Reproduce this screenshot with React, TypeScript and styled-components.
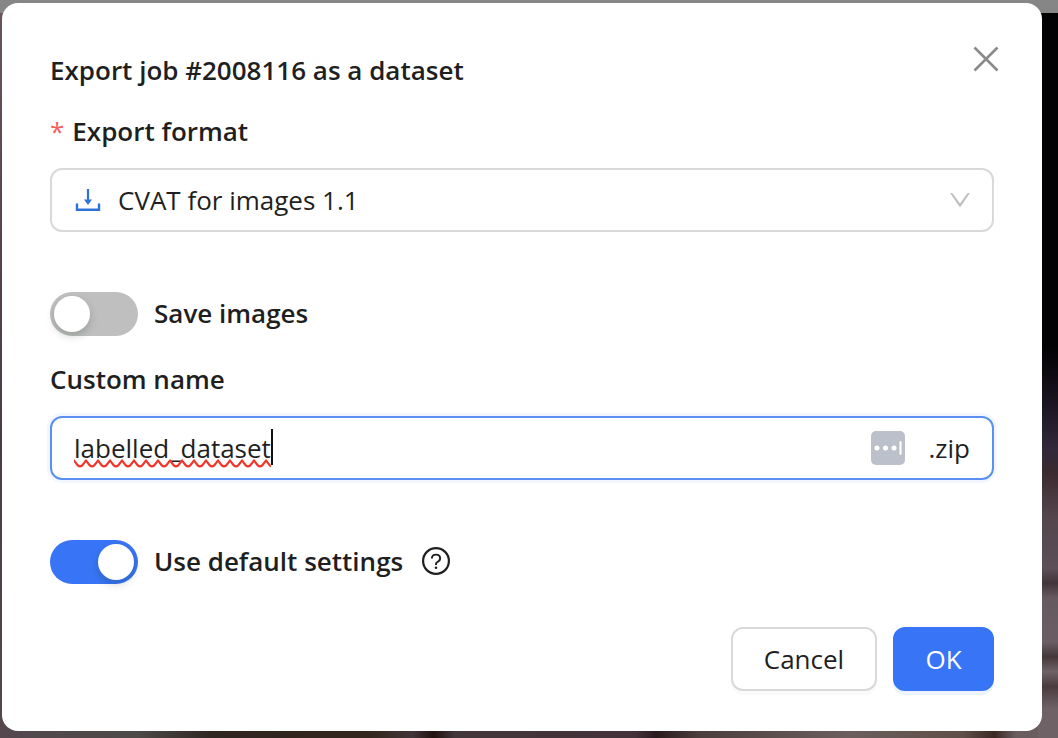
import { useState } from "react";
import styled, { createGlobalStyle } from "styled-components";

const GlobalStyle = createGlobalStyle`
  *, *::before, *::after { box-sizing: border-box; }
  body {
    margin: 0;
    color: #1f1f1f;
    font-family: "Open Sans", "Noto Sans", sans-serif;
    font-size: 26px;
    line-height: 44px;
  }
  button, input, select { font: inherit; color: inherit; }
`;

const Backdrop = styled.div`
  display: flex;
  flex-direction: column;
  min-height: 100vh;
  padding: 3px 16px 7px 2px;
  background:
    linear-gradient(#868686, #868686) top / 100% 13px no-repeat,
    linear-gradient(12deg, transparent 0 1%, transparent) top / 100% 1px no-repeat,
    linear-gradient(#020103 0 47%, #16101a 53%, #33293a 61%, #3a2a30 64%, #54454c 70%, #5c4f58 77%, #41353a 79%, #655a60 81%, #6a5e64 87%, #45373a 89%, #6f6266 91%, #4a3b3e 93%, #6e6266 96%) right / 20px 100% no-repeat,
    linear-gradient(#6b5460, #55424f 35%, #4a3b47 60%, #54474e) left / 20px 100% no-repeat,
    linear-gradient(90deg, #53474e, #4d4a48 13%, #302622 20%, #33261c 35%, #42353a 39%, #21120f 41%, #43363a 43%, #44323a 60%, #2a1a1d 62%, #4a3d3c 66%, #6b5e5d 80%, #5f4f48 91%, #3a2824 94%, #6a5d60 96%);
`;

const Dialog = styled.form`
  position: relative;
  flex: 1;
  display: flex;
  flex-direction: column;
  padding: 46px 48px 40px;
  border-radius: 16px;
  background: #fff;
`;

const Title = styled.h1`
  margin: 0 60px 19px 0;
  font-size: 26px;
  line-height: 42px;
  font-weight: 600;
`;

const CloseButton = styled.button`
  position: absolute;
  top: 34px;
  right: 34px;
  display: grid;
  place-items: center;
  width: 44px;
  height: 44px;
  padding: 0;
  border: 0;
  background: none;
  color: #8a8a8a;
`;

const Field = styled.div`
  display: flex;
  flex-direction: column;
  gap: 16px;
  margin-bottom: 60px;
`;

const Label = styled.label`
  display: flex;
  gap: 8px;
  line-height: 42px;
  font-weight: 600;
`;

const Required = styled.span`
  color: #f5605c;
  font-weight: 400;
`;

const SelectBox = styled.div`
  position: relative;
  height: 64px;
`;

const Select = styled.select`
  appearance: none;
  width: 100%;
  height: 100%;
  padding: 0 66px;
  border: 2px solid #d9d9d9;
  border-radius: 12px;
  background: #fff;
  outline: none;
`;

const SelectIcon = styled.svg<{ $side: "left" | "right" }>`
  position: absolute;
  top: 0;
  bottom: 0;
  ${(p) => p.$side}: 24px;
  margin: auto 0;
  pointer-events: none;
`;

const SwitchRow = styled.div<{ $gap: number }>`
  display: flex;
  gap: 16px;
  margin-bottom: ${(p) => p.$gap}px;
`;

const Switch = styled.input`
  appearance: none;
  flex: none;
  width: 88px;
  height: 44px;
  margin: 0;
  padding: 4px;
  border-radius: 22px;
  background: #bfbfbf;

  &::before {
    content: "";
    display: block;
    width: 36px;
    height: 36px;
    border-radius: 50%;
    background: #fff;
    box-shadow: 0 4px 8px rgba(0, 35, 11, 0.2);
  }
  &:checked { background: #3875f6; }
  &:checked::before { margin-left: auto; }
`;

const HelpButton = styled.button`
  display: grid;
  place-items: center;
  height: 42px;
  margin-left: 3px;
  padding: 0;
  border: 0;
  background: none;
`;

const InputBox = styled.div`
  display: flex;
  align-items: center;
  height: 64px;
  padding: 0 22px;
  border: 2px solid #5b8ff0;
  border-radius: 12px;
  box-shadow: 0 0 0 3px #f2f7ff;
`;

const Editor = styled.div`
  position: relative;
  display: flex;
  align-items: center;
  flex: none;
  max-width: 80%;
`;

const TextInput = styled.input`
  field-sizing: content;
  min-width: 2px;
  height: 44px;
  padding: 0;
  border: 0;
  outline: none;
  background: none;
  caret-color: transparent;
`;

const Caret = styled.span`
  position: absolute;
  left: 100%;
  top: 3px;
  width: 2px;
  height: 36px;
  background: #111;
`;

const Squiggle = styled.svg`
  position: absolute;
  left: 0;
  top: 33px;
  width: 100%;
  height: 9px;
`;

const FillButton = styled.button`
  display: grid;
  place-items: center;
  margin: 0 24px 0 auto;
  padding: 0;
  border: 0;
  background: none;
`;

const Footer = styled.div`
  display: flex;
  justify-content: flex-end;
  gap: 16px;
  margin-top: auto;
`;

const Button = styled.button<{ $primary?: boolean }>`
  min-width: ${(p) => (p.$primary ? 101 : 146)}px;
  height: 64px;
  padding: 0 28px;
  border: 2px solid ${(p) => (p.$primary ? "#3875f6" : "#d9d9d9")};
  border-radius: 12px;
  background: ${(p) => (p.$primary ? "#3875f6" : "#fff")};
  color: ${(p) => (p.$primary ? "#fff" : "#1f1f1f")};
  box-shadow: 0 4px 0 ${(p) => (p.$primary ? "#ebf4ff" : "#fafafa")};
`;

export default function App() {
  const [saveImages, setSaveImages] = useState(false);
  const [defaults, setDefaults] = useState(true);
  const [name, setName] = useState("labelled_dataset");

  return (
    <>
      <GlobalStyle />
      <Backdrop>
        <Dialog role="dialog" aria-labelledby="title" onSubmit={(e) => e.preventDefault()}>
          <Title id="title">Export job #2008116 as a dataset</Title>
          <CloseButton type="button" aria-label="Close">
            <svg width="26" height="26" viewBox="0 0 26 26" fill="none" stroke="currentColor" strokeWidth="2.6">
              <path d="M1.5 1.5 24.5 24.5M24.5 1.5 1.5 24.5" />
            </svg>
          </CloseButton>

          <Field>
            <Label htmlFor="format">
              <Required>*</Required>
              Export format
            </Label>
            <SelectBox>
              <Select id="format">
                <option>CVAT for images 1.1</option>
              </Select>
              <SelectIcon $side="left" width="28" height="28" viewBox="0 0 28 28">
                <path d="M3 17.6v6.2h22v-6.2" fill="none" stroke="#2f73d9" strokeWidth="2.4" />
                <path d="M12.9 3h2.2v10.6h3L14 19l-4.1-5.4h3z" fill="#2f73d9" />
              </SelectIcon>
              <SelectIcon $side="right" width="20" height="20" viewBox="0 0 20 20">
                <path d="M0 3h2.4L10 13.6 17.6 3H20L10.8 16.2q-.8 1-1.6 0z" fill="#bfbfbf" />
              </SelectIcon>
            </SelectBox>
          </Field>

          <SwitchRow $gap={22}>
            <Switch id="save" type="checkbox" role="switch" checked={saveImages} onChange={(e) => setSaveImages(e.target.checked)} />
            <Label htmlFor="save">Save images</Label>
          </SwitchRow>

          <Field>
            <Label htmlFor="name">Custom name</Label>
            <InputBox>
              <Editor>
                <TextInput id="name" type="text" spellCheck={false} value={name} onChange={(e) => setName(e.target.value)} />
                <Squiggle aria-hidden="true">
                  <defs>
                    <pattern id="wave" width="12" height="9" patternUnits="userSpaceOnUse">
                      <path d="M-2 0 0 1.5 3.8 6.4q2.2 2.2 4.4 0L12 1.5 14 0" fill="none" stroke="#f2352a" strokeWidth="2.2" />
                    </pattern>
                  </defs>
                  <rect width="100%" height="9" fill="url(#wave)" />
                </Squiggle>
                <Caret />
              </Editor>
              <FillButton type="button" aria-label="Fill in a saved value">
                <svg width="34" height="34" viewBox="0 0 34 34" fill="#fff">
                  <rect width="34" height="34" rx="5" fill="#bcc0ca" />
                  <circle cx="6" cy="17" r="2.5" />
                  <circle cx="14.5" cy="17" r="2.5" />
                  <circle cx="23" cy="17" r="2.5" />
                  <rect x="28.5" y="10" width="2" height="14" rx="1" />
                </svg>
              </FillButton>
              <span>.zip</span>
            </InputBox>
          </Field>

          <SwitchRow $gap={43}>
            <Switch id="defaults" type="checkbox" role="switch" checked={defaults} onChange={(e) => setDefaults(e.target.checked)} />
            <Label htmlFor="defaults">Use default settings</Label>
            <HelpButton type="button" aria-label="Help">
              <svg width="28" height="28" viewBox="0 0 28 28" fill="none" stroke="#1f1f1f" strokeWidth="2.2">
                <circle cx="14" cy="14" r="12.9" />
                <path d="M9.9 11.4c0-2.3 1.8-3.8 4.1-3.8s4.1 1.5 4.1 3.7c0 1.7-1 2.9-2.4 3.5-1.1.5-1.7 1-1.7 2.2v.9" strokeWidth="1.9" />
                <circle cx="14" cy="20.8" r="1.3" fill="#1f1f1f" stroke="none" />
              </svg>
            </HelpButton>
          </SwitchRow>

          <Footer>
            <Button type="button">Cancel</Button>
            <Button type="submit" $primary>OK</Button>
          </Footer>
        </Dialog>
      </Backdrop>
    </>
  );
}
